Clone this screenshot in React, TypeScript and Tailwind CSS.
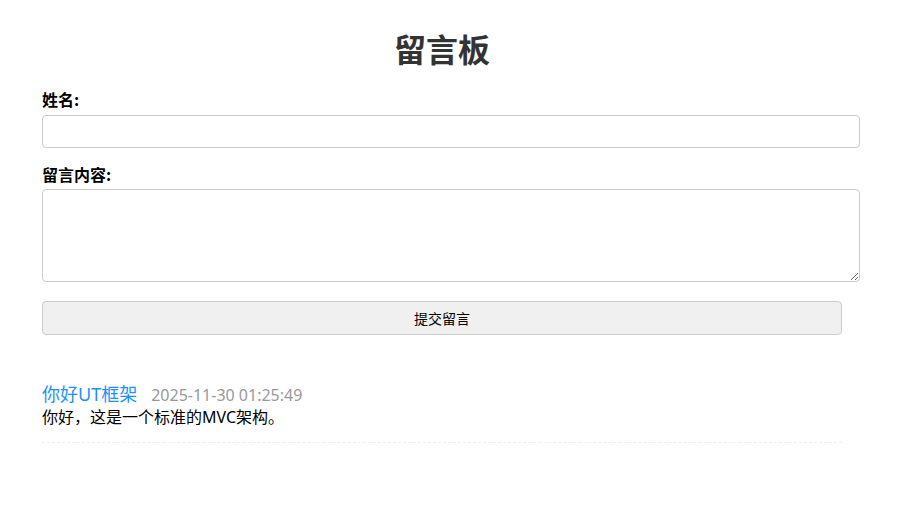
import React from "react";

export default function App() {
  const font = { fontFamily: '"Noto Sans CJK SC", "Noto Sans", sans-serif' };
  const latin = { fontFamily: '"Noto Sans", "Noto Sans CJK SC", sans-serif' };
  return (
    <div className="min-h-[513px] bg-white text-[#333]" style={font}>
      <div className="w-[800px] ml-[42px] pt-[28px]">
        <h1 className="text-[32px] leading-[40px] font-bold text-center text-[#333]">留言板</h1>
        <div className="mt-[21px]">
          <label className="block text-[16px] leading-[20px] font-bold text-black">姓名:</label>
          <input
            type="text"
            className="mt-[6px] block w-[818px] h-[33px] border border-[#ccc] rounded-[4px] px-2 outline-none"
          />
        </div>
        <div className="mt-[16px]">
          <label className="block text-[16px] leading-[20px] font-bold text-black">留言内容:</label>
          <textarea className="mt-[5px] block w-[818px] h-[93px] border border-[#ccc] rounded-[4px] p-2 outline-none" />
        </div>
        <button className="mt-[19px] block w-[800px] h-[34px] bg-[#f0f0f0] border border-[#ccc] rounded-[4px] text-[14px] text-black">
          提交留言
        </button>
        <div className="mt-[47px] pb-[15px] border-b border-dashed border-[#eee]">
          <div className="flex items-baseline">
            <span className="text-[18px] leading-[24px] text-[#1e90ff]" style={latin}>你好UT框架</span>
            <span className="ml-[14px] text-[16px] leading-[24px] text-[#999]" style={latin}>2025-11-30 01:25:49</span>
          </div>
          <div className="text-[16px] leading-[20px] text-black" style={latin}>你好，这是一个标准的MVC架构。</div>
        </div>
      </div>
    </div>
  );
}
